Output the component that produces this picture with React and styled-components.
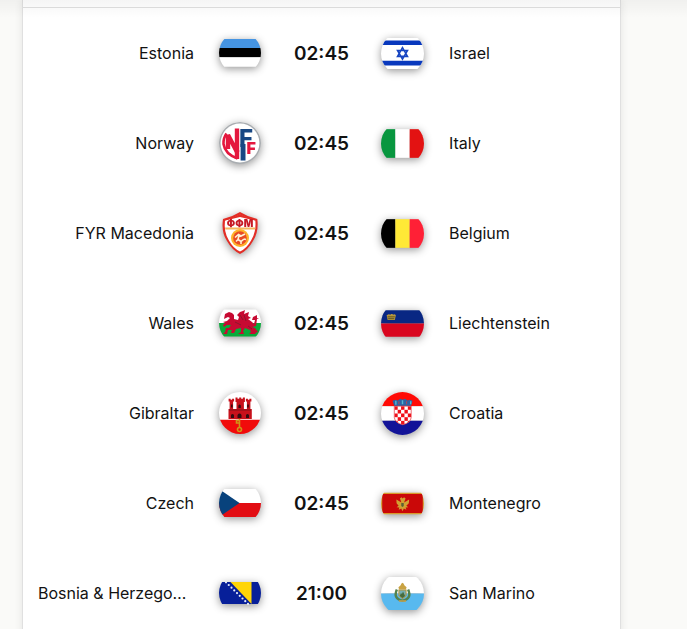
import React from "react";
import styled, { createGlobalStyle } from "styled-components";

const GlobalStyle = createGlobalStyle`
  * { box-sizing: border-box; }
  body {
    margin: 0;
    background: #fafaf8;
    color: #121212;
    font-family: Inter, "Liberation Sans", sans-serif;
    font-size: 16px;
    line-height: 24px;
  }
`;

const Page = styled.div`
  position: relative;
  min-height: 100vh;
  max-height: 100vh;
  overflow: hidden;
  padding: 0 66px 0 22px;
`;

const TopShade = styled.div`
  position: absolute;
  inset: 0 0 auto 0;
  height: 18px;
  background: linear-gradient(rgba(0, 0, 0, 0.04), rgba(0, 0, 0, 0));
  pointer-events: none;
`;

const Card = styled.main`
  background: #fff;
  border: solid #e0e0e0;
  border-width: 0 1px 0 1px;
  box-shadow: 0 0 8px rgba(0, 0, 0, 0.09);
`;

const CardHeader = styled.div`
  height: 8px;
  border-bottom: 1px solid #e0e0e0;
`;

const MatchList = styled.ul`
  list-style: none;
  margin: 0;
  padding: 0;
`;

const Match = styled.li`
  display: grid;
  grid-template-columns: minmax(0, 1fr) 43px 119px 43px minmax(0, 1fr);
  align-items: center;
  height: 90px;
  padding: 0 15px;
`;

const Team = styled.span`
  overflow: hidden;
  white-space: nowrap;
  text-overflow: ellipsis;
  text-align: ${(p) => (p.$home ? "right" : "left")};
  padding: ${(p) => (p.$home ? "0" : "0 0 0 25px")};
  margin-right: ${(p) => (p.$home ? "25px" : "0")};
`;

const Kickoff = styled.time`
  padding-top: 2px;
  text-align: center;
  font-size: 19px;
  font-weight: 600;
`;

const Emblem = styled.svg`
  display: block;
  width: ${(p) => (p.$home ? 42 : 43)}px;
  height: ${(p) => (p.$home ? 42 : 43)}px;
  overflow: visible;
  filter: drop-shadow(0 2px 4px rgba(0, 0, 0, 0.42));
`;

const Estonia = () => (
  <>
    <path fill="#4594e2" d="M0 7h42v9H0z" />
    <path fill="#000" d="M0 16h42v9.3H0z" />
    <path fill="#fff" d="M0 25.3h42v9.4H0z" />
  </>
);

const Israel = () => (
  <>
    <path fill="#fff" d="M0 5.8h42v30.4H0z" />
    <path fill="#0838bd" d="M0 8.2h42v4.6H0zM0 28.2h42v4.6H0z" />
    <path fill="none" stroke="#1745c1" strokeWidth="1.5" d="M21 15.2l4.9 8.6h-9.8zM21 26.6l4.9-8.6h-9.8z" />
  </>
);

const Norway = () => (
  <>
    <circle cx="21" cy="21" r="21" fill="#a9adb1" />
    <circle cx="21" cy="21" r="19.4" fill="#fff" />
    <path d="M7.5 11.5Q4.2 16 4.5 22Q6 32 18.5 36.5" fill="none" stroke="#e4173e" strokeWidth="2.6" />
    <path d="M9 27V13L18 30V6.5" fill="none" stroke="#e4173e" strokeWidth="4.4" />
    <path d="M18 28v9" stroke="#e4173e" strokeWidth="4.4" />
    <text x="20" y="25" fontFamily="Inter, sans-serif" fontWeight="800" fontSize="24" fill="#174783">F</text>
    <path d="M21.6 22h4.9v16.5h-4.9z" fill="#174783" />
    <text x="27.5" y="32" fontFamily="Inter, sans-serif" fontWeight="900" fontSize="16" fill="#e4173e">F</text>
  </>
);

const Tricolour = ({ colours }) =>
  colours.map((c, i) => <rect key={c} x={i * 14} y="7" width="14.1" height="28" fill={c} />);
const Italy = () => <Tricolour colours={["#08963f", "#fff", "#e31212"]} />;
const Belgium = () => <Tricolour colours={["#000", "#ffe936", "#ff2036"]} />;

const Macedonia = () => (
  <>
    <path fill="#e32d26" d="M4 7Q13 5 21 0Q29 5 38.3 7Q40 20 34 29Q29 38 21 42Q13 38 8 29Q2 20 4 7z" />
    <path fill="#fff" d="M6 8.6Q14 6.6 21 2.6Q28 6.6 36.3 8.6Q37.4 20 32.2 28.2Q28 36 21 39.6Q14 36 9.8 28.2Q4.6 20 6 8.6z" />
    <path fill="#e32d26" d="M6 7.8Q14 6 21 2Q28 6 36.3 7.8l0 .8Q28 6.8 21 5Q14 6.8 6 8.6z" />
    <path fill="#f6b65e" d="M6 15.5h30.5l-.5 2H6.4z" />
    <text x="21" y="14.6" textAnchor="middle" fontFamily="Inter, sans-serif" fontWeight="900" fontSize="10" fill="#c71924">ФФМ</text>
    <circle cx="21" cy="26" r="9" fill="#ffb42c" />
    <circle cx="21" cy="26" r="6.8" fill="#e84a25" />
    <path d="M16 25.500l3.500-3 2.500 1.500 4-2M20 23.500l-1 4 3 2 3-2.500M19 27.500l-2 2M22 29.500v2.500M25 27l2 .5" fill="none" stroke="#fff2d5" strokeWidth="1.6" />
  </>
);

const Wales = () => (
  <>
    <path fill="#fff" d="M0 7.5h42V21H0z" />
    <path fill="#08aa3a" d="M0 21h42v13.5H0z" />
    <path fill="#c70a32" d="M6 12l4-2 3 1 2 2v4l4 1 1-3-2-2 3-3 3-1 2-1-1 4 5-2-1 4 3 2-3 1 4 3 2 2 1-4-3 0 1-3 4-2 0 3 2 1-2 0-1 7-4 1 3 1 3 4-3 1 1 1h-7l2-2-1-2-5-2-2 3 1 3h-6l3-2 0-4-5 1-2 4-3 0 1-3-4 0-1 4-4 0 2-2 1-4 3 0 2-3-4 0-3 2-1-2 2-2-2-1 4-1 3-3-2-1-4 2z" />
    <path d="M21 13l3 5m1-5l2 6M16 20l6 3m7 1l4 3" stroke="#7d192b" strokeWidth="0.8" />
  </>
);

const Liechtenstein = () => (
  <>
    <path fill="#092783" d="M0 8h42v13H0z" />
    <path fill="#d9061f" d="M0 21h42v13H0z" />
    <path fill="#b7983e" d="M5.5 13l2-1 2 .5V11.8h2v.7l2-.5 1 1-1 4.5H6.5z" />
    <path stroke="#4b421f" d="M6.5 14.5h7M7 16.3h6" strokeWidth="0.8" />
  </>
);

const Gibraltar = () => (
  <>
    <path fill="#fff" d="M0 0h42v28H0z" />
    <path fill="#f10b0b" d="M0 27.7h42V42H0z" />
    <path fill="#c8111b" d="M16.5 5.5h2v1.3h1.7V5.5h2v1.3h1.7V5.5h2V10h-1v7h3V9.5h-1V6.8h2v1h1.5v-1h2v2.7h-1V17h1.4v10H9.5V17h1.1V9.5h-1V6.8h2v1h1.5v-1h2v2.7h-1V17h3.4v-7h-1z" />
    <path fill="#340c11" d="M12 26v-3q1.500-2.200 3 0v3zM18.500 26v-3q2-2.800 4 0v3zM27 26v-3q1.500-2.200 3 0v3zM19.400 16v-2.500q1.200-1.800 2.400 0V16zM12 15.500v-3h1.600v3zM28.200 15.500v-3h1.600v3z" />
    <path d="M10 18h22" stroke="#81121b" strokeWidth="1" />
    <g fill="none" stroke="#cf9517" strokeWidth="1.6">
      <path d="M20.500 27v8M20.500 31h-3v-2.500h3" />
      <circle cx="20.5" cy="37.5" r="2" />
    </g>
  </>
);

const Croatia = () => (
  <>
    <path fill="#ff0a05" d="M0 0h42v14H0z" />
    <path fill="#fff" d="M0 14h42v14H0z" />
    <path fill="#121398" d="M0 28h42v14H0z" />
    <path fill="#2c64a4" d="M11.2 8.5l3-1 2.2.7 2.5-1.6 2.2 1 2.3-1 2.5 1.6 2.2-.7 2.7 1-1.5 5.2H13z" />
    <path stroke="#55b5d1" d="M14.5 8.5v4M21 8v4M29 9v3" strokeWidth="1.4" />
    <path stroke="#b84357" d="M17.5 9v3M25 9v3" />
    <g clipPath="url(#croatia-shield)">
      <path fill="#fff" d="M12 13.5h18v19H12z" />
      {Array.from({ length: 25 }, (_, i) =>
        i % 2 === 0 ? (
          <rect key={i} x={13 + (i % 5) * 3.3} y={13.8 + Math.floor(i / 5) * 3.6} width="3.3" height="3.6" fill="#f01019" />
        ) : null
      )}
    </g>
    <path fill="none" stroke="#e7343d" strokeWidth="0.7" d="M13 13.8h16.5v11Q29 30 21.2 32Q13.5 30 13 24.8z" />
    <clipPath id="croatia-shield">
      <path d="M13 13.8h16.5v11Q29 30 21.2 32Q13.5 30 13 24.8z" />
    </clipPath>
  </>
);

const Czech = () => (
  <>
    <path fill="#fff" d="M0 7h42v14H0z" />
    <path fill="#e20d13" d="M0 21h42v14H0z" />
    <path fill="#08427c" d="M0 7l20.5 14L0 35z" />
  </>
);

const Montenegro = () => (
  <>
    <path fill="#d99a2b" d="M0 10.5h42v21H0z" />
    <path fill="#ca0808" d="M1.2 11.8h39.6v18.4H1.2z" />
    <path
      fill="#d2a032"
      d="M15 17l5 3-1.5-4 1.5-1 1.2 1 1.3-1 1.5 1-1.5 4 5-3-.3 3.8-2.5 2.3 2 1.5-2.7.4.8 2-2.5-1L21 28.5 19.8 26l-2.5 1 .6-2-2.7-.4 2-1.5-2-2.3z"
    />
    <path fill="#596135" d="M19.8 20.5h2.4v3l-1.2 1-1.2-1z" />
  </>
);

const Bosnia = () => (
  <>
    <path fill="#071f99" d="M0 10h42v22H0z" />
    <path fill="#ffd507" d="M11.5 10h21v22z" />
    {Array.from({ length: 9 }, (_, i) => (
      <circle key={i} cx={7 + i * 2.75} cy={10.3 + i * 2.7} r="1.1" fill="#e5ebfa" />
    ))}
  </>
);

const SanMarino = () => (
  <>
    <path fill="#fff" d="M0 5h42v16H0z" />
    <path fill="#58b9ef" d="M0 21h42v16H0z" />
    <path fill="none" stroke="#54834e" strokeWidth="2.4" d="M15.5 17q-4 9 5.5 11Q30.5 26 26.5 17" />
    <path fill="#c9a343" d="M17 14.8l2-1.6 1-2 1-.8 1 .8 1 2 2 1.6-.7 2.2h-6.6z" />
    <path fill="#76aeb5" stroke="#b49439" d="M17.5 17.5h7v5.5l-3.5 3-3.5-3z" />
    <path fill="#466c3e" d="M18.3 23.5l1.2-3 1 1 1-2.5 2 4.5-2.5 2z" />
    <path stroke="#c4a14d" strokeWidth="1.3" d="M17.5 28.3h7" />
  </>
);

const matches = [
  { home: "Estonia", time: "02:45", away: "Israel", HomeArt: Estonia, AwayArt: Israel },
  { home: "Norway", time: "02:45", away: "Italy", HomeArt: Norway, AwayArt: Italy },
  { home: "FYR Macedonia", time: "02:45", away: "Belgium", HomeArt: Macedonia, AwayArt: Belgium, freeform: true },
  { home: "Wales", time: "02:45", away: "Liechtenstein", HomeArt: Wales, AwayArt: Liechtenstein },
  { home: "Gibraltar", time: "02:45", away: "Croatia", HomeArt: Gibraltar, AwayArt: Croatia },
  { home: "Czech", time: "02:45", away: "Montenegro", HomeArt: Czech, AwayArt: Montenegro },
  { home: "Bosnia & Herzegovina", time: "21:00", away: "San Marino", HomeArt: Bosnia, AwayArt: SanMarino },
];

function TeamEmblem({ name, Art, home, freeform }) {
  const id = `round-${name.replace(/[^a-z]/gi, "")}`;
  return (
    <Emblem $home={home} viewBox="0 0 42 42" role="img" aria-label={name}>
      <clipPath id={id}>
        <circle cx="21" cy="21" r="21" />
      </clipPath>
      <g clipPath={freeform ? undefined : `url(#${id})`}>
        <Art />
      </g>
    </Emblem>
  );
}

export default function App() {
  return (
    <Page>
      <GlobalStyle />
      <Card>
        <CardHeader />
        <MatchList>
          {matches.map((m) => (
            <Match key={m.home}>
              <Team $home>{m.home}</Team>
              <TeamEmblem name={m.home} Art={m.HomeArt} freeform={m.freeform} home />
              <Kickoff>{m.time}</Kickoff>
              <TeamEmblem name={m.away} Art={m.AwayArt} />
              <Team>{m.away}</Team>
            </Match>
          ))}
        </MatchList>
      </Card>
      <TopShade />
    </Page>
  );
}
